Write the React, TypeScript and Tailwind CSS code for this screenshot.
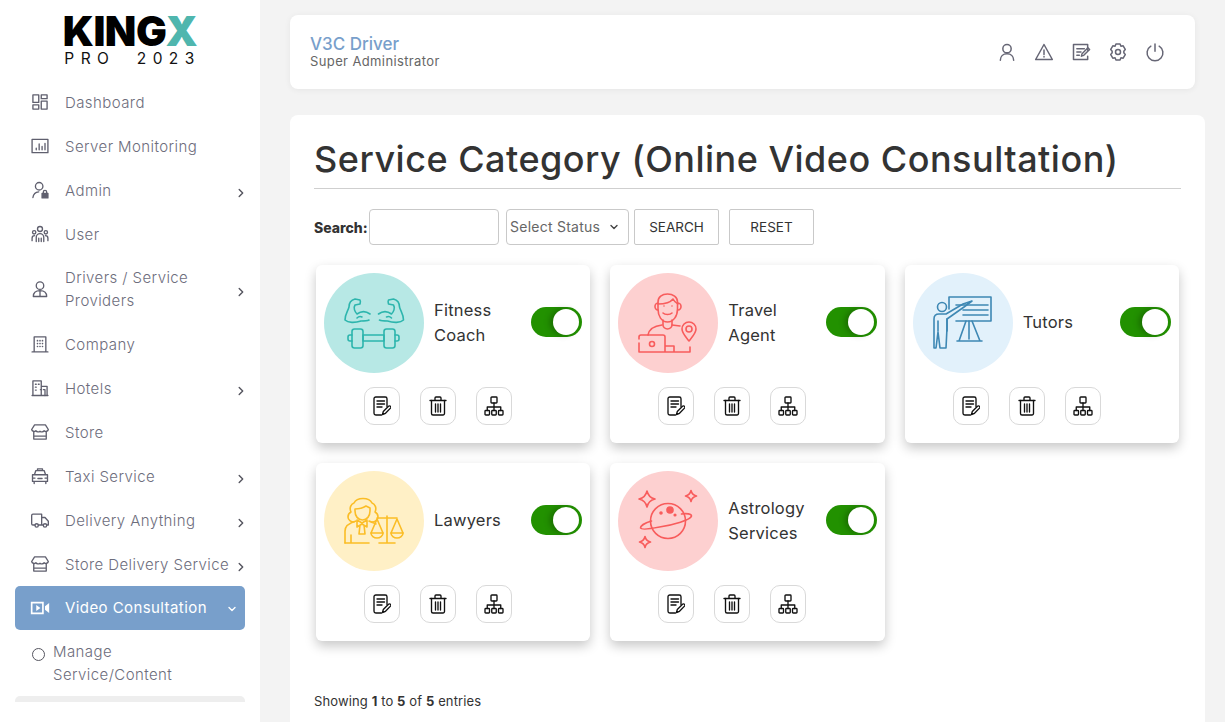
import React from "react";

const S = ({ children, className = "w-5 h-5", sw = 1.6, vb = "0 0 24 24" }: { children: React.ReactNode; className?: string; sw?: number; vb?: string }) => (
  <svg viewBox={vb} className={className} fill="none" stroke="currentColor" strokeWidth={sw} strokeLinecap="round" strokeLinejoin="round">
    {children}
  </svg>
);

const I = {
  dash: <S><rect x="3.500" y="3.500" width="7" height="9" /><rect x="13.500" y="3.500" width="7" height="4.500" /><rect x="3.500" y="15.500" width="7" height="5" /><rect x="13.500" y="11" width="7" height="9.500" /></S>,
  server: <S><rect x="2.500" y="4" width="19" height="16" /><path d="M7.500 16.500v-2M11 16.500V9.500M14.500 16.500v-4M18 16.500V9" /></S>,
  admin: <S><circle cx="11" cy="7.500" r="4.500" /><path d="M3.500 21c.5-4 3-6.500 7-6.800" /><rect x="14.500" y="16" width="7" height="5.500" fill="currentColor" /><path d="M16 16v-1.500a2 2 0 0 1 4 0V16" /></S>,
  user: <S><circle cx="12" cy="6" r="3" /><circle cx="5" cy="10" r="2" /><circle cx="19" cy="10" r="2" /><path d="M7.500 21v-5a4.500 4.500 0 0 1 9 0v5M2.500 20v-3a3 3 0 0 1 3-3M21.500 20v-3a3 3 0 0 0-3-3M10.500 21v-4M13.500 21v-4" /></S>,
  driver: <S><circle cx="12" cy="8" r="4.500" /><path d="M4 21c0-4.500 3-7 8-7s8 2.500 8 7zM12 14v7" /></S>,
  company: <S><path d="M5 21V3.500h14V21M2.500 21.500h19" /><path d="M9 8h.01M12 8h.01M15 8h.01M9 11.500h.01M12 11.500h.01M15 11.500h.01M9 15h.01M12 15h.01M15 15h.01" strokeWidth="2" /></S>,
  hotel: <S><path d="M3.500 21V3.500h10V21M13.500 10h7v11M2.500 21h19" /><path d="M6.500 7.500h1M10 7.500h1M6.500 11h1M6.500 14.500h1M16 14h2v7M13.500 14h-1" /></S>,
  store: <S><path d="M5.500 3.500h13L22 9a3 3 0 0 1-5 1.500 3.500 3.500 0 0 1-5 .5 3.500 3.500 0 0 1-5-.5A3 3 0 0 1 2 9zM4.500 11v9.500h15V11M4.500 17h15" /></S>,
  taxi: <S><path d="M9 5.500V3.500h6v2M5.500 10l1.500-4.500h10L18.500 10M3 10.500h18v8H3zM5 18.500v2.500M19 18.500v2.500M3 14.500h3M18 14.500h3M9.500 15h5" /></S>,
  truck: <S><path d="M6 18H3.500a1.500 1.500 0 0 1-1.500-1.500V6.500A1.500 1.500 0 0 1 3.500 5H14v13H10M14 9h4l4 4.500V18h-2M14 18h2" /><circle cx="8" cy="18.500" r="2" /><circle cx="18" cy="18.500" r="2" /></S>,
  video: <svg viewBox="0 0 24 24" className="w-5 h-5"><path fillRule="evenodd" fill="currentColor" d="M1 4.500h15.500v15H1zM3 6.500v11h11.500v-11zM7.500 8.500l5 3.500-5 3.500zM18 10l5-4v12l-5-4z" /></svg>,
};

const Chevron = ({ down, cls }: { down?: boolean; cls: string }) => (
  <svg viewBox="0 0 10 10" className={cls} fill="none" stroke="currentColor" strokeWidth="1.400" strokeLinecap="round" strokeLinejoin="round">
    {down ? <path d="M2 3.500l3 3 3-3" /> : <path d="M3.200 1.500l3.500 3.500-3.500 3.500" />}
  </svg>
);

const Item = ({ icon, label, arrow, tall }: { icon: React.ReactNode; label: React.ReactNode; arrow?: boolean; tall?: boolean }) => (
  <div className={`flex items-center pl-[15px] text-[#6d6d7c] leading-[23px] ${tall ? "py-[10px]" : "py-[10.500px]"}`}>
    <span className="w-5 h-5 shrink-0 text-[#5f5f6e]">{icon}</span>
    <span className="ml-[15px] flex-1 text-[15px] font-light tracking-[0.42px] whitespace-nowrap">{label}</span>
    {arrow && <Chevron cls="w-[10px] h-[10px] mt-[6px] -mr-[1px] text-[#55555f] shrink-0" />}
  </div>
);

const Art = ({ stroke, children }: { stroke: string; children: React.ReactNode }) => (
  <svg viewBox="0 0 100 100" className="w-[100px] h-[100px]" fill="none" stroke={stroke} strokeWidth="1.600" strokeLinecap="round" strokeLinejoin="round">
    {children}
  </svg>
);

const armPath = "M21 47c0-6 3-9 4-13 0-4 2-7 6-8l5 1c1 2 0 3 0 4l-5 1c-2 3 0 7 2 9 4-3 9-3 13 0M21 47c3 3 10 3 16 1 3 0 6 0 8-1M33 45c1-1 3-2 5-1";

const Fitness = () => (
  <Art stroke="#2db5ad">
    <path d={armPath} />
    <g transform="translate(100.500 0) scale(-1 1)"><path d={armPath} /></g>
    <rect x="28" y="56" width="11" height="19" rx="2.500" />
    <rect x="60" y="56" width="11" height="19" rx="2.500" />
    <rect x="39" y="62" width="21" height="6" />
    <path d="M28 62h-2a2 2 0 0 0-2 2v2a2 2 0 0 0 2 2h2M71 62h2a2 2 0 0 1 2 2v2a2 2 0 0 1-2 2h-2" />
  </Art>
);

const Travel = () => (
  <Art stroke="#f85c5c">
    <path d="M40 36v-7c0-5 4-8 9.500-8s10 3 10 8v7c0 7-4 13-10 13s-9.500-6-9.500-13z" />
    <path d="M40 31c6 0 12-1 15-5 1 2 3 4 5 5M40 30c-2 0-3 2-3 3.500S38 37 40 37M60 30c2 0 3 2 3 3.500S62 37 60 37" />
    <path d="M45 40c2 2 7 2 9 0M46 33h.01M54 33h.01" />
    <path d="M45 47v5c0 2 2 4 4.500 4s4.500-2 4.500-4v-5" />
    <path d="M30 62c1-6 6-9 14-10M54 52l8 1" />
    <path d="M21 66v-2a2 2 0 0 1 2-2h22a2 2 0 0 1 2 2v15M21 70v9h26M47 79h25v-5M47 73h9v6" />
    <circle cx="34" cy="71" r="2.500" />
    <path d="M71 68c-4-5-7-8-7-12a7 7 0 0 1 14 0c0 4-3 7-7 12z" />
    <circle cx="71" cy="56" r="3" />
  </Art>
);

const Tutor = () => (
  <Art stroke="#3e88b4">
    <path d="M36 36V24h42v24H43" />
    <path d="M43 32h32M50 37h25M50 42h25" />
    <path d="M56 48v18M53 48l-7 20M59 48l8 20M44 68h25" />
    <circle cx="29" cy="34" r="4.500" />
    <path d="M21 56V46c0-4 2-5 5-5h7l17-10 9-3-8 6-17 12v9l-1 20h-6l-2-16-2 16h-2V56" />
    <path d="M25 48v10M34 46v12" />
  </Art>
);

const Lawyer = () => (
  <Art stroke="#fbbd26">
    <path d="M30 51c-3 0-6-2-6-5 0-2 1-4 3-5-2-4 0-8 3-9 3-6 15-6 18 0 3 1 5 5 3 9 2 1 3 3 3 5 0 3-3 5-6 5" />
    <path d="M31 38c4 0 8-1 11-3l4 2v3c0 5-3 9-7.500 9S31 45 31 40z" />
    <path d="M21 72V60c0-5 4-8 11-10M45 50c2 1 5 2 7 3" />
    <path d="M33 49l5 3 5-3v7l-5-3-5 3zM36 54l-1 9h6l-1-9" />
    <path d="M21 72h24M27 64v8" />
    <path d="M63 45v27M55 72h16M53 47h20" />
    <path d="M53 48l-6 14h12zM73 48l-6 14h12z" />
    <path d="M47 62c0 3 3 5 6 5s6-2 6-5M67 62c0 3 3 5 6 5s6-2 6-5" />
  </Art>
);

const Astro = () => {
  const star = (x: number, y: number, r: number) => `M${x} ${y - r}q${r * 0.18} ${r * 0.82} ${r} ${r}q${-r * 0.82} ${r * 0.18} ${-r} ${r}q${-r * 0.18} ${-r * 0.82} ${-r} ${-r}q${r * 0.82} ${-r * 0.18} ${r} ${-r}z`;
  return (
    <Art stroke="#f85c5c">
      <path d={star(29, 28, 8)} />
      <path d={star(73, 25, 5.500)} />
      <path d={star(27, 71, 5.500)} />
      <circle cx="50" cy="50" r="17.500" />
      <path d="M33.500 50c-7 2-11 5-11 7 1 2 9 1 19-1 14-2 31-7 32-11 0-2-5-3-10-2" />
      <circle cx="52" cy="39" r="3" fill="#f85c5c" />
      <circle cx="43" cy="42" r="1" fill="#f85c5c" />
      <circle cx="57" cy="44" r="0.800" fill="#f85c5c" />
    </Art>
  );
};

const EditIcon = () => (
  <svg viewBox="0 0 18 20" className="w-[18px] h-5" fill="none" stroke="#111" strokeWidth="1.350" strokeLinecap="round" strokeLinejoin="round">
    <path d="M8.500 19H2.800A1.800 1.800 0 0 1 1 17.200V2.800A1.800 1.800 0 0 1 2.800 1h9.400A1.800 1.800 0 0 1 14 2.800v7.700" />
    <path d="M4 5h7.500M4 8h7.500M4 11h5" />
    <path d="M9.500 18.500l.8-3 5.200-5.200a1.200 1.200 0 0 1 2 1.800l-5 5.200z" />
  </svg>
);

const TrashIcon = () => (
  <svg viewBox="0 0 18 20" className="w-[18px] h-5" fill="none" stroke="#111" strokeWidth="1.350" strokeLinecap="round" strokeLinejoin="round">
    <path d="M1 4.500h16M6 4V2a1 1 0 0 1 1-1h4a1 1 0 0 1 1 1v2" />
    <path d="M2.500 4.500V17.500a1.500 1.500 0 0 0 1.500 1.500h10a1.500 1.500 0 0 0 1.500-1.500V4.500" />
    <path d="M6.500 8v8M9 8v8M11.500 8v8" />
  </svg>
);

const OrgIcon = () => (
  <svg viewBox="0 0 20 20" className="w-5 h-5" fill="none" stroke="#111" strokeWidth="1.350" strokeLinecap="round" strokeLinejoin="round">
    <rect x="7" y="1" width="6" height="6" rx="0.800" />
    <rect x="1" y="14.500" width="4.500" height="4.500" rx="0.800" />
    <rect x="7.750" y="14.500" width="4.500" height="4.500" rx="0.800" />
    <rect x="14.500" y="14.500" width="4.500" height="4.500" rx="0.800" />
    <path d="M10 7v7.500M3.250 14.500V11h13.500v3.500" />
  </svg>
);

const Action = ({ children }: { children: React.ReactNode }) => (
  <div className="w-9 h-[38px] rounded-[10px] border border-[#d9d9d9] bg-white flex items-center justify-center">{children}</div>
);

const Card = ({ bg, art, label }: { bg: string; art: React.ReactNode; label: React.ReactNode }) => (
  <div className="h-[178px] rounded-[6px] bg-white pt-2 px-2 shadow-[0_5px_12px_rgba(0,0,0,0.22)]">
    <div className="flex items-center">
      <div className={`w-[100px] h-[100px] rounded-full shrink-0 ${bg}`}>{art}</div>
      <div className="ml-[10px] flex-1 text-[16.500px] leading-[25px] text-[#333] tracking-[0.2px]">{label}</div>
      <div className="w-[51px] h-[30px] mb-[2px] rounded-full bg-[#229100] flex items-center justify-end pr-[3px] shrink-0">
        <div className="w-[26px] h-[26px] rounded-full bg-white shadow-[-3px_0_6px_rgba(0,0,0,0.25)]" />
      </div>
    </div>
    <div className="flex gap-5 mt-[14px] pl-10">
      <Action><EditIcon /></Action>
      <Action><TrashIcon /></Action>
      <Action><OrgIcon /></Action>
    </div>
  </div>
);

const One = ({ children }: { children: React.ReactNode }) => <span className="block mb-[2px]">{children}</span>;

export default function App() {
  return (
    <div className="flex h-[722px] overflow-hidden bg-[#f3f3f3] font-['Inter','Liberation_Sans',sans-serif]">
      <aside className="w-[260px] shrink-0 bg-white h-full">
        <div className="h-[80px] flex flex-col items-center pt-[11px]">
          <div className="text-[41px] leading-[40px] font-black tracking-[-0.500px] text-black">KING<span className="text-[#4fb6ae]">X</span></div>
          <div className="text-[15.500px] leading-[16px] text-[#111] tracking-[6.400px] whitespace-pre pl-[5px]">PRO  2023</div>
        </div>
        <nav className="h-[622px] overflow-hidden mx-[15px]">
          <Item icon={I.dash} label="Dashboard" />
          <Item icon={I.server} label="Server Monitoring" />
          <Item icon={I.admin} label="Admin" arrow />
          <Item icon={I.user} label="User" />
          <Item tall icon={I.driver} label={<>Drivers / Service<br />Providers</>} arrow />
          <Item icon={I.company} label="Company" />
          <Item icon={I.hotel} label="Hotels" arrow />
          <Item icon={I.store} label="Store" />
          <Item icon={I.taxi} label="Taxi Service" arrow />
          <Item icon={I.truck} label="Delivery Anything" arrow />
          <Item icon={I.store} label="Store Delivery Service" arrow />
          <div className="h-[44px] flex items-center pl-[15px] pr-[8px] rounded-[5px] bg-[#789fcb] text-white">
            <span className="w-5 h-5 shrink-0">{I.video}</span>
            <span className="ml-[15px] flex-1 text-[15px] tracking-[0.42px]">Video Consultation</span>
            <Chevron down cls="w-[10px] h-[10px] mt-[2px]" />
          </div>
          <div className="flex pl-[17px] pt-[9.500px] pb-[10px] text-[#6d6d7c]">
            <span className="w-[13px] h-[13px] mt-[8px] rounded-full border border-[#55555f] shrink-0" />
            <span className="ml-[8px] text-[15px] leading-[23px] font-light tracking-[0.42px]">Manage<br />Service/Content</span>
          </div>
          <div className="h-[44px] rounded-[5px] bg-[#eeeeee]" />
        </nav>
      </aside>

      <main className="flex-1 pl-[30px] pr-[20px] pt-[15px] min-w-0">
        <header className="h-[74px] mr-[10px] rounded-[8px] bg-white shadow-[0_1px_6px_rgba(0,0,0,0.06)] flex items-center justify-between pl-5 pr-[30px]">
          <div className="mb-[2px]">
            <div className="text-[17px] leading-[20px] font-medium text-[#789fcb]">V3C Driver</div>
            <div className="text-[13px] leading-[15px] text-[#666] tracking-[0.38px]">Super Administrator</div>
          </div>
          <div className="flex items-center gap-[17px] text-[#666675] mb-[1px]">
            <S className="w-5 h-5" sw={1.8}><circle cx="12" cy="8" r="5" /><path d="M4 22c0-5 3.500-8 8-8s8 3 8 8" /></S>
            <S className="w-5 h-5" sw={1.8}><path d="M12 3L2 21h20zM12 9.500v5.500M12 17.500v.5" /></S>
            <S className="w-5 h-5" sw={1.8}><path d="M20 10V3H3v18h17v-4" /><path d="M7 8h9M7 12h5M7 16h3M12.500 17l.8-3 7-7 2 2-7 7z" /></S>
            <S className="w-5 h-5" sw={1.8}><path d="M9.500 2.500h5l1 2.500 2.700-.4 2.500 4.300L19 11v2l1.700 2.100-2.500 4.300-2.700-.4-1 2.500h-5l-1-2.500-2.700.4-2.500-4.300L5 13v-2L3.300 8.900l2.500-4.300 2.700.4z" /><circle cx="12" cy="12" r="3" /></S>
            <S className="w-5 h-5" sw={1.8}><path d="M12 2.500V11M7 5a9.500 9.500 0 1 0 10 0" /></S>
          </div>
        </header>

        <section className="mt-[26px] h-[640px] rounded-t-[8px] bg-white px-6 pt-[23px]">
          <h1 className="text-[36px] leading-[42px] font-medium text-[#333] tracking-[0.5px] whitespace-nowrap">Service Category (Online Video Consultation)</h1>
          <div className="h-px bg-[#cfcfcf] mt-[8px]" />
          <div className="flex items-center mt-5 text-[13.500px]">
            <label className="font-extrabold text-[#333] text-[14px] w-[55px] whitespace-nowrap">Search:</label>
            <div className="w-[130px] h-9 rounded-[4px] border border-[#c9c9c9] bg-white" />
            <div className="ml-[7px] w-[123px] h-9 rounded-[4px] border border-[#c9c9c9] bg-white flex items-center justify-between pl-[3px] pr-[9px] text-[#666] text-[14px] tracking-[0.25px]">
              <span className="mb-[1px]">Select Status</span>
              <Chevron down cls="w-[10px] h-[10px] text-[#444]" />
            </div>
            <div className="ml-[5px] w-[85px] h-9 pt-[1px] rounded-[2px] border border-[#c9c9c9] flex items-center justify-center text-[#333]">SEARCH</div>
            <div className="ml-[10px] w-[85px] h-9 pt-[1px] rounded-[2px] border border-[#c9c9c9] flex items-center justify-center text-[#333]">RESET</div>
          </div>
          <div className="grid grid-cols-3 gap-5 mt-5 mx-[2px]">
            <Card bg="bg-[#b7e8e5]" art={<Fitness />} label={<>Fitness<br />Coach</>} />
            <Card bg="bg-[#fdd0d0]" art={<Travel />} label={<>Travel<br />Agent</>} />
            <Card bg="bg-[#e2f1fb]" art={<Tutor />} label={<One>Tutors</One>} />
            <Card bg="bg-[#fff0c6]" art={<Lawyer />} label={<One>Lawyers</One>} />
            <Card bg="bg-[#fdd0d0]" art={<Astro />} label={<>Astrology<br />Services</>} />
          </div>
          <div className="mt-[51px] text-[13px] leading-[18px] text-[#333] tracking-[0.12px]">Showing <b>1</b> to <b>5</b> of <b>5</b> entries</div>
        </section>
      </main>
    </div>
  );
}
